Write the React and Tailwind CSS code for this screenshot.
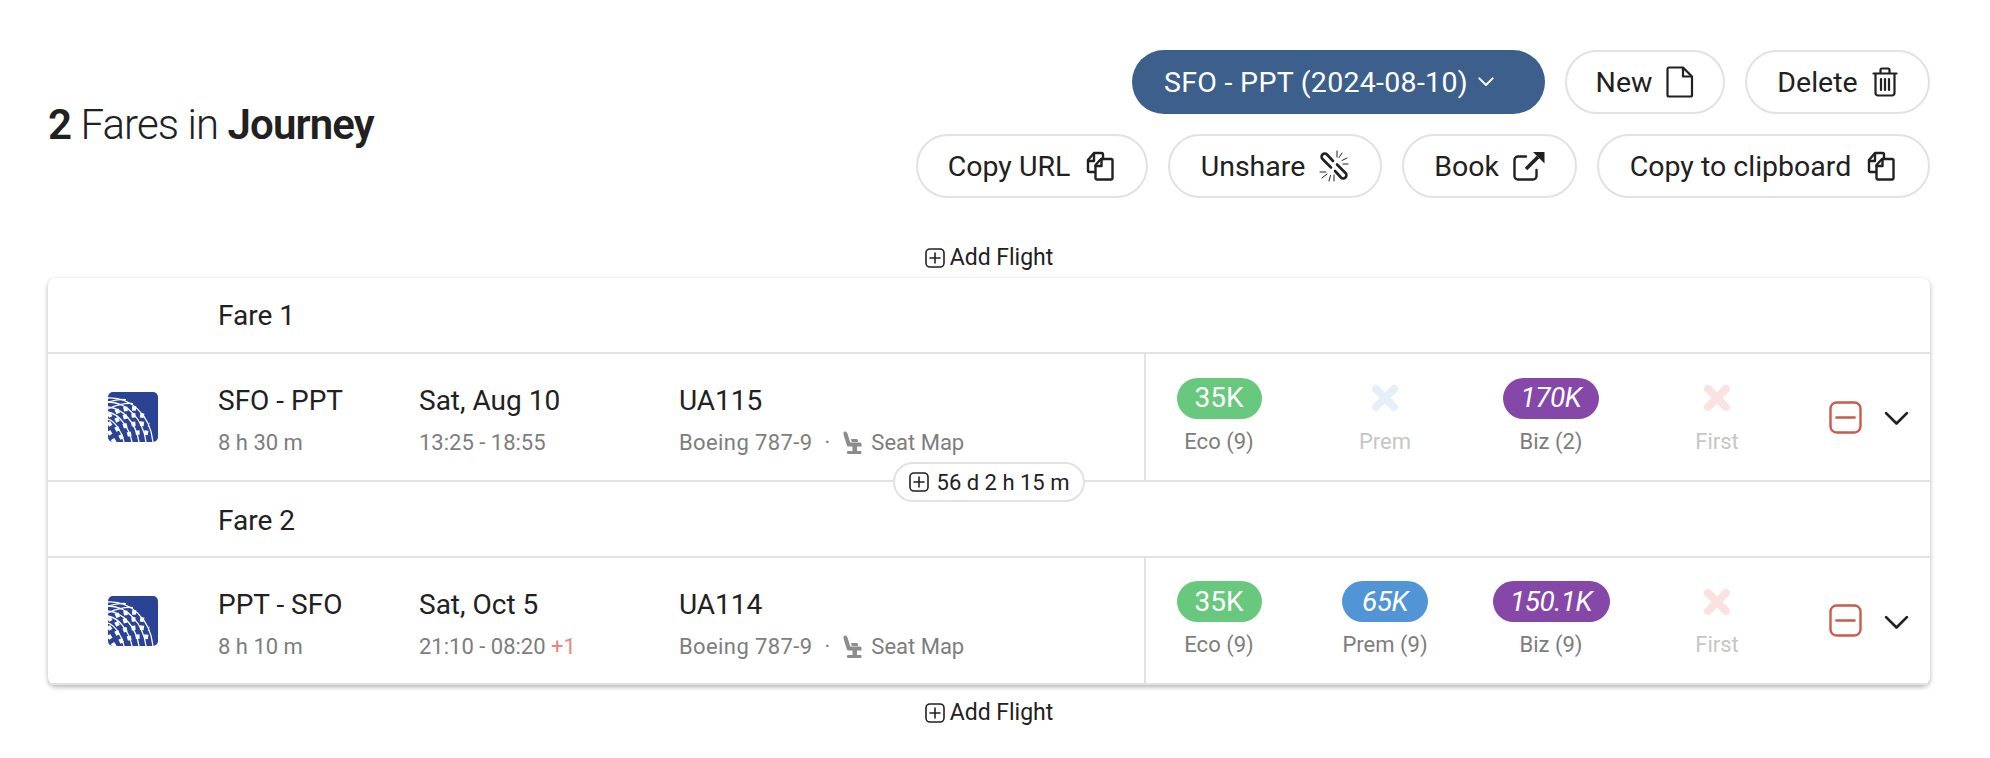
import React from 'react';

const DARK = '#212121';

const CopyIcon = () => (
  <svg width="32" height="32" viewBox="0 0 32 32" fill="none" stroke={DARK} strokeWidth="2.400" strokeLinejoin="round" strokeLinecap="round">
    <path d="M11 22H5.500A1.500 1.500 0 0 1 4 20.500V10l6-7h7.500A1.500 1.500 0 0 1 19 4.500V9" />
    <path d="M4 11h6V4" />
    <path d="M17 9h10a1.500 1.500 0 0 1 1.500 1.500V28a1.500 1.500 0 0 1-1.500 1.500H13a1.500 1.500 0 0 1-1.500-1.500V15z" />
    <path d="M11.500 16h6V9" />
  </svg>
);

const FileIcon = () => (
  <svg width="28" height="32" viewBox="0 0 28 32" fill="none" stroke={DARK} strokeWidth="2.200" strokeLinejoin="round">
    <path d="M3 1.500h14l9 9V29a1.500 1.500 0 0 1-1.500 1.500H3A1.500 1.500 0 0 1 1.500 29V3A1.500 1.500 0 0 1 3 1.500z" />
    <path d="M17 1.500v9h9" />
  </svg>
);

const TrashIcon = () => (
  <svg width="26" height="30" viewBox="0 0 26 30" fill="none" stroke={DARK} strokeWidth="2.200" strokeLinecap="round" strokeLinejoin="round">
    <path d="M1.500 6.500h23" />
    <path d="M8.500 6V3A1.500 1.500 0 0 1 10 1.500h6A1.500 1.500 0 0 1 17.500 3v3" />
    <path d="M3.500 7v19A2.500 2.500 0 0 0 6 28.500h14a2.500 2.500 0 0 0 2.500-2.500V7" />
    <path d="M9 12v11M13 12v11M17 12v11" />
  </svg>
);

const UnlinkIcon = () => (
  <svg width="30" height="32" viewBox="0 0 30 32" fill="none" stroke={DARK} strokeLinecap="round" strokeLinejoin="round">
    <path strokeWidth="2.600" d="M14 11 8 4.500a3.200 3.200 0 0 0-4.500 0 3.200 3.200 0 0 0 0 4.500L12 17.500" />
    <path strokeWidth="2.600" d="M16 21l6 6.500a3.200 3.200 0 0 0 4.500 0 3.200 3.200 0 0 0 0-4.500L18 14.500" />
    <path strokeWidth="1" d="M18 1v6M23 3l-3 4.500M28 8l-5 2.500M29 14h-5M1 22h6M3 28l5-4M10 31l1.500-5.500M15 25v6" />
  </svg>
);

const ExternalIcon = () => (
  <svg width="32" height="30" viewBox="0 0 32 30" fill="none" stroke={DARK} strokeLinejoin="round">
    <path strokeWidth="2.400" strokeLinecap="round" d="M13 5.500H5A3.500 3.500 0 0 0 1.500 9v16A3.500 3.500 0 0 0 5 28.500h15a3.500 3.500 0 0 0 3.500-3.500v-6" />
    <path strokeWidth="3.600" d="M13 18 25 6" />
    <path fill={DARK} stroke="none" d="M20 1h11.500v11.500z" />
  </svg>
);

const PlusBox = () => (
  <svg width="20" height="20" viewBox="0 0 20 20" fill="none" stroke={DARK} strokeWidth="1.600" strokeLinecap="round">
    <rect x="1" y="1" width="18" height="18" rx="4" />
    <path d="M10 5v10M5 10h10" />
  </svg>
);

const MinusBox = () => (
  <svg width="33" height="33" viewBox="0 0 33 33" fill="none" stroke="#c95b4a" strokeWidth="2.400" strokeLinecap="round">
    <rect x="1.500" y="1.500" width="30" height="30" rx="6" />
    <path d="M7.500 16.500h18" strokeWidth="2.600" />
  </svg>
);

const Chevron = ({ color = DARK, w = 25, sw = 2.600 }) => (
  <svg width={w} height={w * 0.6} viewBox="0 0 24 14.400" fill="none" stroke={color} strokeWidth={sw} strokeLinecap="round" strokeLinejoin="round">
    <path d="M2 2l10 10L22 2" />
  </svg>
);

const Cross = ({ color }) => (
  <svg width="30" height="30" viewBox="0 0 30 30" fill="none" stroke={color} strokeWidth="8" strokeLinecap="round">
    <path d="M6 6l18 18M24 6 6 24" />
  </svg>
);

const SeatIcon = () => (
  <svg width="20" height="24" viewBox="0 0 20 24" fill="#8c8c8c">
    <path d="M1.500 2C1.500.5 4 0 5 1.500c.5.8.7 1.500.9 2.300L8.200 11.500H18a1.500 1.500 0 0 1 1.500 1.500v2.500H6.800c-1 0-1.700-.5-2-1.500L1.800 4.500A9 9 0 0 1 1.500 2z" />
    <path d="M9 8h5.500c1 0 1.500.8 1.500 1.700V11H9.800zM10.500 15h4.500v5h-4.500z" />
    <rect x="5" y="20" width="14.500" height="3" rx="1" />
  </svg>
);

// globe mark: meridian arcs fanning from the left edge, chunky dashes between them
const UnitedLogo = () => (
  <svg width="50" height="50" viewBox="0 0 50 50">
    <defs>
      <clipPath id="logo-clip">
        <rect width="50" height="50" rx="5" />
      </clipPath>
    </defs>
    <g clipPath="url(#logo-clip)" fill="none" stroke="#fff">
      <rect width="50" height="50" fill="#2a4394" stroke="none" />
      <path strokeWidth="1.300" d="M0 6C22 5 42 22 45 50M0 10C19 10 35 27 38 50M0 15C15 16 28 31 31 50M0 20C11 22 21 35 24 50M0 27C7 29 14 40 16 50" />
      <path strokeWidth="1.100" d="M0 10C6 8 12 7 18 7.500M0 17C8 13 17 11 25 11.500" />
      <g strokeWidth="4.500" strokeDasharray="4 4.500">
        <path d="M0 24C9 18 21 15 31 17" />
        <path d="M0 33C10 26 25 21 36 24" />
        <path d="M0 42C12 34 28 29 41 33" />
        <path d="M4 50C16 42 31 38 44 42" />
      </g>
    </g>
  </svg>
);

const PillButton = ({ label, icon, className = '' }) => (
  <button className={`flex h-[64px] items-center justify-center gap-[14px] rounded-full border-2 border-[#e2e2e2] bg-white text-[#212121] ${className}`}>
    <span className="pt-[2px] text-[28.5px]">{label}</span>
    {icon}
  </button>
);

const FareCell = ({ price, label, color, italic, empty, width }) => (
  <div className="flex w-[146px] flex-col items-center">
    {empty ? (
      <div className="flex h-[41px] items-center justify-center">
        <Cross color={empty} />
      </div>
    ) : (
      <div
        className={`flex h-[41px] items-center justify-center rounded-full text-[28px] text-white ${width} ${color} ${
          italic ? 'italic tracking-[-0.5px]' : ''
        }`}
      >
        {price}
      </div>
    )}
    <div className={`mt-[8px] text-[22px] leading-[30px] ${empty ? 'text-[#c6c6c6]' : 'text-[#7d7d7d]'}`}>{label}</div>
  </div>
);

const AddFlight = () => (
  <div className="flex items-center justify-center gap-[5px] text-[23px] leading-[26px] text-[#212121]">
    <PlusBox />
    <span>Add Flight</span>
  </div>
);

const FlightRow = ({ height, route, duration, date, times, plusDay, flight, fares }) => (
  <div className={`grid grid-cols-[1098px_1fr] border-b-2 border-[#e2e2e2] last:border-b-0 ${height}`}>
    <div className="grid grid-cols-[170px_201px_260px_1fr] items-center border-r-2 border-[#e2e2e2] pt-[6px]">
      <div className="pb-[6px] pl-[60px]">
        <UnitedLogo />
      </div>
      <div>
        <div className="text-[28px] leading-[36px] text-[#212121]">{route}</div>
        <div className="mt-[10px] text-[22px] leading-[28px] text-[#7d7d7d]">{duration}</div>
      </div>
      <div>
        <div className="text-[28px] leading-[36px] text-[#212121]">{date}</div>
        <div className="mt-[10px] text-[22px] leading-[28px] text-[#7d7d7d]">
          {times}
          {plusDay && <span className="text-[#e58a80]"> +1</span>}
        </div>
      </div>
      <div>
        <div className="text-[28px] leading-[36px] text-[#212121]">{flight}</div>
        <div className="mt-[10px] flex items-center text-[22px] leading-[28px] text-[#7d7d7d]">
          <span className="tracking-[0.4px]">Boeing 787-9</span>
          <span className="mx-[12px]">·</span>
          <SeatIcon />
          <span className="ml-[9px]">Seat Map</span>
        </div>
      </div>
    </div>
    <div className="flex items-center">
      <div className="flex gap-[20px]">
        {fares.map((fare) => (
          <FareCell key={fare.label} {...fare} />
        ))}
      </div>
      <div className="ml-[39px] flex items-center gap-[22px]">
        <MinusBox />
        <div className="mt-[3px]">
          <Chevron />
        </div>
      </div>
    </div>
  </div>
);

const GREEN = 'bg-[#68c97e]';
const BLUE = 'bg-[#5295d6]';
const PURPLE = 'bg-[#8548a8]';

const App = () => {
  return (
    <div className="h-[758px] w-[1990px] overflow-hidden bg-white pl-[48px] pr-[60px] pt-[50px] font-['Roboto',sans-serif]">
      <div className="flex items-center justify-between">
        <h1 className="text-[42px] font-light tracking-[-0.9px] text-[#212121]">
          <span className="font-semibold">2</span> Fares in <span className="font-semibold">Journey</span>
        </h1>
        <div className="flex flex-col items-end gap-[20px]">
          <div className="flex gap-[20px]">
            <button className="flex h-[64px] w-[413px] items-center gap-[10px] rounded-full bg-[#3c5f8b] pl-[32px] text-white">
              <span className="pt-[2px] text-[28.5px] tracking-[0.3px]">SFO - PPT (2024-08-10)</span>
              <Chevron color="#fff" w={16} sw={3} />
            </button>
            <PillButton label="New" icon={<FileIcon />} className="w-[160px]" />
            <PillButton label="Delete" icon={<TrashIcon />} className="w-[185px]" />
          </div>
          <div className="flex gap-[20px]">
            <PillButton label="Copy URL" icon={<CopyIcon />} className="w-[232px]" />
            <PillButton label="Unshare" icon={<UnlinkIcon />} className="w-[214px]" />
            <PillButton label="Book" icon={<ExternalIcon />} className="w-[175px]" />
            <PillButton label="Copy to clipboard" icon={<CopyIcon />} className="w-[333px]" />
          </div>
        </div>
      </div>

      <div className="flex h-[80px] items-end justify-center pb-[7px]">
        <AddFlight />
      </div>

      <div className="relative rounded-[8px] bg-white shadow-[0_2px_5px_rgba(0,0,0,0.3)]">
        <div className="flex h-[76px] items-center border-b-2 border-[#e2e2e2] pl-[170px] pt-[2px] text-[28px] text-[#212121]">Fare 1</div>
        <FlightRow
          height="h-[128px]"
          route="SFO - PPT"
          duration="8 h 30 m"
          date="Sat, Aug 10"
          times="13:25 - 18:55"
          flight="UA115"
          fares={[
            { price: '35K', label: 'Eco (9)', color: GREEN, width: 'w-[85px]' },
            { label: 'Prem', empty: '#e4eff7' },
            { price: '170K', label: 'Biz (2)', color: PURPLE, italic: true, width: 'w-[96px]' },
            { label: 'First', empty: '#f9e2df' },
          ]}
        />
        <div className="flex h-[76px] items-center border-b-2 border-[#e2e2e2] pl-[170px] pt-[4px] text-[28px] text-[#212121]">Fare 2</div>
        <FlightRow
          height="h-[127px]"
          route="PPT - SFO"
          duration="8 h 10 m"
          date="Sat, Oct 5"
          times="21:10 - 08:20"
          plusDay
          flight="UA114"
          fares={[
            { price: '35K', label: 'Eco (9)', color: GREEN, width: 'w-[85px]' },
            { price: '65K', label: 'Prem (9)', color: BLUE, italic: true, width: 'w-[86px]' },
            { price: '150.1K', label: 'Biz (9)', color: PURPLE, italic: true, width: 'w-[117px]' },
            { label: 'First', empty: '#f9e2df' },
          ]}
        />
        {/* layover pill sits on the divider */}
        <div className="absolute left-[845px] top-[184px] flex h-[40px] w-[192px] items-center justify-center gap-[8px] rounded-full border-2 border-[#e2e2e2] bg-white text-[22px] text-[#212121]">
          <PlusBox />
          <span>56 d 2 h 15 m</span>
        </div>
      </div>

      <div className="mt-[15px] flex justify-center">
        <AddFlight />
      </div>
    </div>
  );
};

export default App;
